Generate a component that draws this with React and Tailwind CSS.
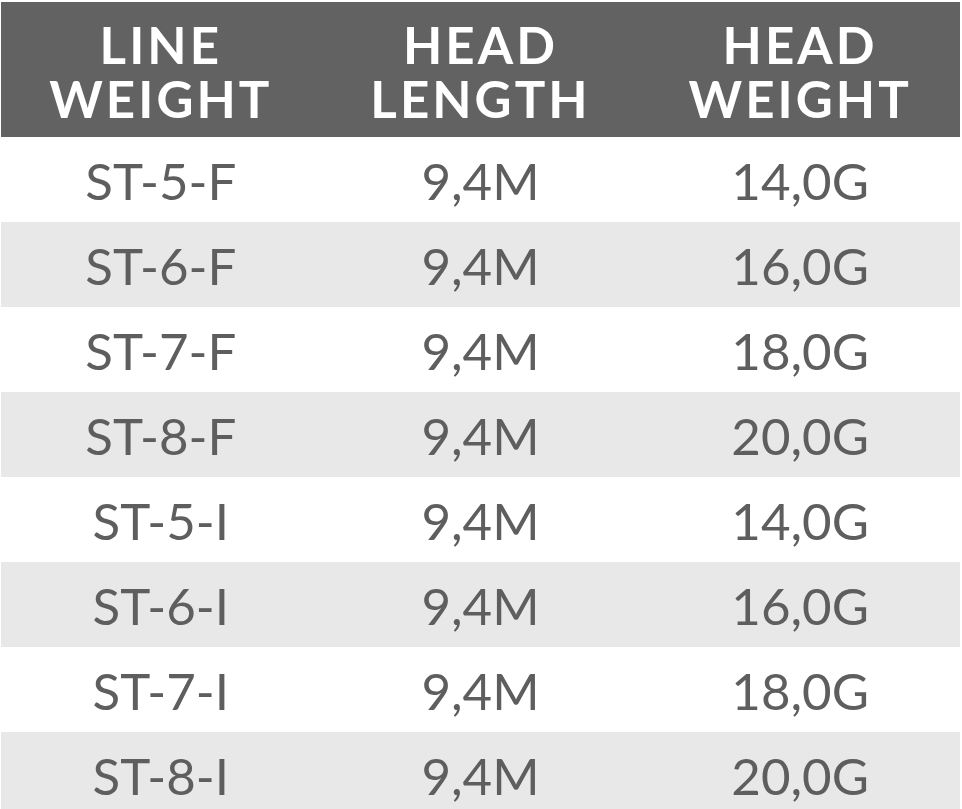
import React from "react";

const rows = [
  ["ST-5-F", "9,4M", "14,0G"],
  ["ST-6-F", "9,4M", "16,0G"],
  ["ST-7-F", "9,4M", "18,0G"],
  ["ST-8-F", "9,4M", "20,0G"],
  ["ST-5-I", "9,4M", "14,0G"],
  ["ST-6-I", "9,4M", "16,0G"],
  ["ST-7-I", "9,4M", "18,0G"],
  ["ST-8-I", "9,4M", "20,0G"],
];

const headers = [
  ["LINE", "WEIGHT"],
  ["HEAD", "LENGTH"],
  ["HEAD", "WEIGHT"],
];

export default function App() {
  return (
    <div
      className="w-[962px] bg-white pt-[2px] pl-[1px] pr-[2px]"
      style={{ fontFamily: "Lato, 'Open Sans', sans-serif" }}
    >
      <div className="grid grid-cols-3 h-[135px] bg-[#626262]">
        {headers.map((h, i) => (
          <div key={i} className="flex items-center justify-center pt-[5px]">
            <p className="text-center text-white font-bold text-[51px] leading-[54px] tracking-[0.06em]">
              {h[0]}
              <br />
              {h[1]}
            </p>
          </div>
        ))}
      </div>
      {rows.map((r, i) => (
        <div
          key={i}
          className={
            "grid grid-cols-3 h-[85px] " + (i % 2 === 1 ? "bg-[#e8e8e8]" : "bg-white")
          }
        >
          {r.map((c, j) => (
            <div
              key={j}
              className="flex items-center justify-center pt-[4px] text-[#5e5e5e] text-[51px] font-normal"
            >
              {c}
            </div>
          ))}
        </div>
      ))}
    </div>
  );
}
